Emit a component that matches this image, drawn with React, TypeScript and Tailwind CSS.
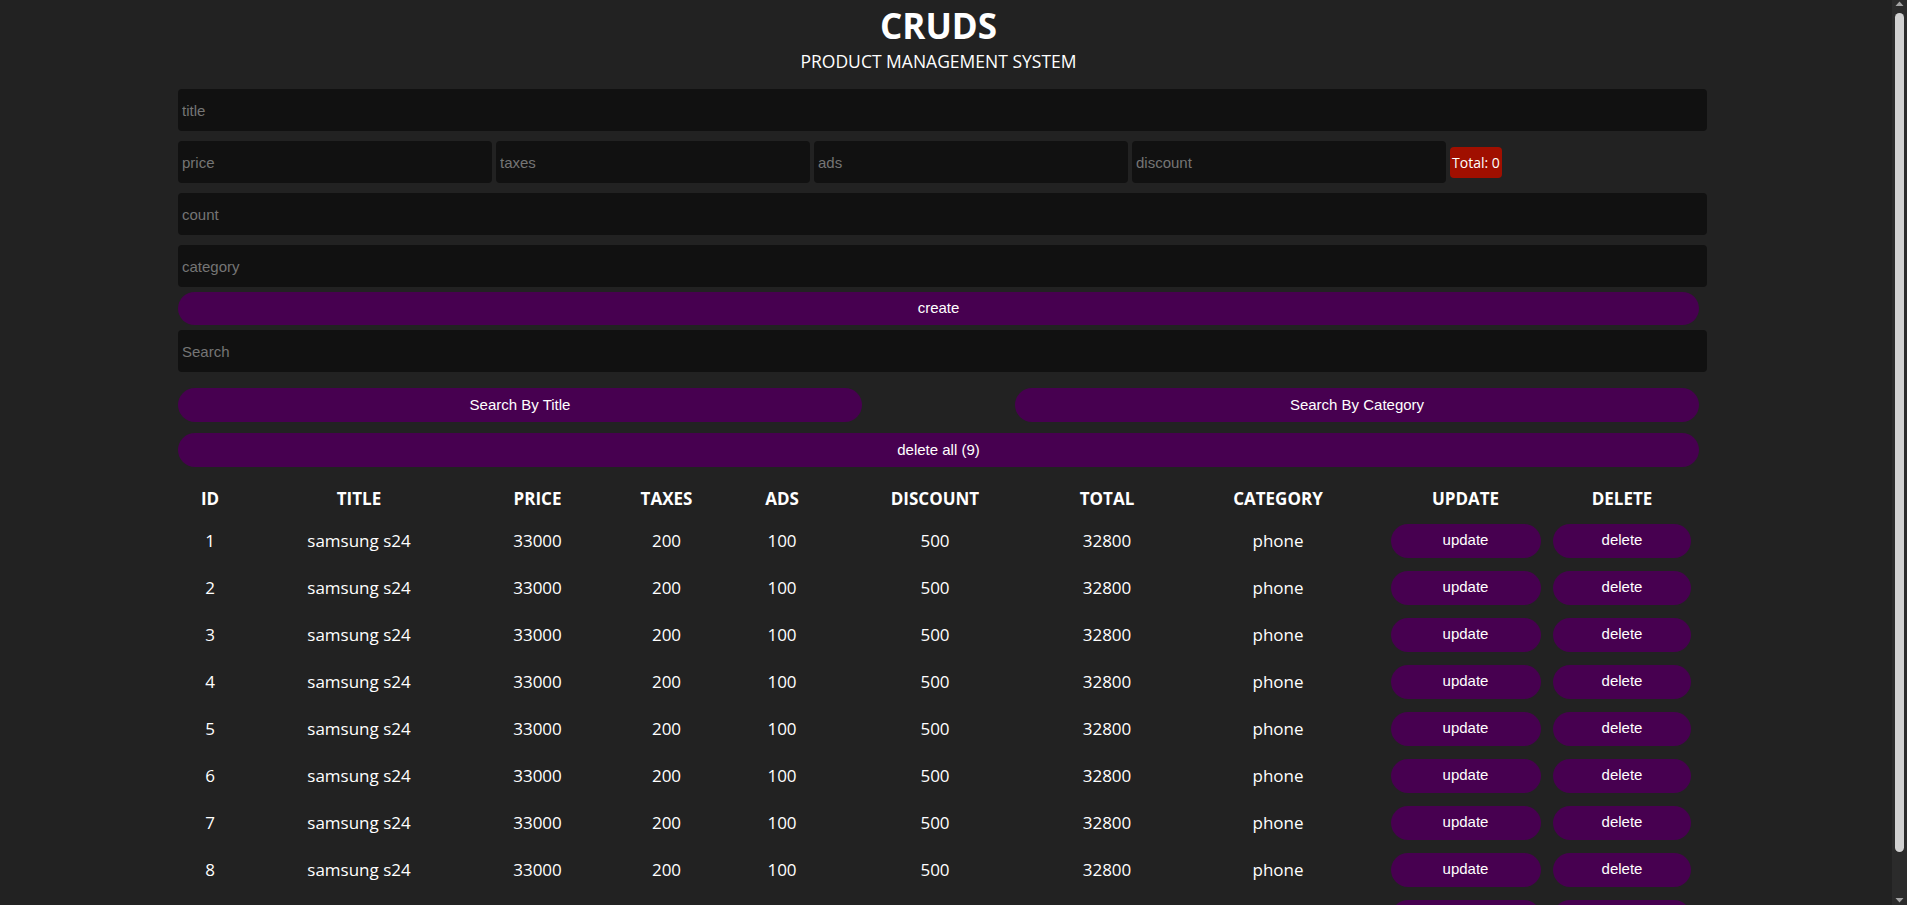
import React from "react";

const sans = "font-['Open_Sans','Noto_Sans',sans-serif]";
const arial = "font-['Liberation_Sans',Arial,sans-serif]";

const inputCls =
  "block bg-[#111111] text-white rounded-[4px] outline-none border-0 px-[4px] text-[15px] placeholder:text-[#757575] " +
  arial;

const btnCls =
  "bg-[#470050] text-white rounded-full text-[15px] flex items-center justify-center " + arial;

const cols = [64, 234, 123, 135, 96, 210, 134, 208, 167, 146];
const heads = ["ID", "TITLE", "PRICE", "TAXES", "ADS", "DISCOUNT", "TOTAL", "CATEGORY", "UPDATE", "DELETE"];

function ScrollBar() {
  return (
    <div className="flex h-screen w-[15px] shrink-0 flex-col items-center bg-[#2b2b2b]">
      <svg width="9" height="6" viewBox="0 0 9 6" className="mt-[1px]">
        <path d="M4.5 0.5 L8.5 5 L0.5 5 Z" fill="#a3a3a3" />
      </svg>
      <div className="mt-[6px] h-[839px] w-[9px] rounded-full bg-[#d1d1d1]" />
      <div className="flex-1" />
      <svg width="9" height="6" viewBox="0 0 9 6" className="mb-[2px]">
        <path d="M0.5 1 L8.5 1 L4.5 5.5 Z" fill="#a3a3a3" />
      </svg>
    </div>
  );
}

export default function App() {
  const rows = Array.from({ length: 9 }, (_, i) => i + 1);
  return (
    <div className="flex h-screen overflow-hidden bg-[#222222] text-white">
      <div className="h-screen flex-1 overflow-hidden">
        <div className="ml-[178px] w-[1521px] pb-[8px]">
          <div className={"text-center " + sans}>
            <h2 className="pt-[5px] text-[35px] leading-[42px] font-bold">CRUDS</h2>
            <p className="mt-[2px] text-[17.5px] leading-[24px]">PRODUCT MANAGEMENT SYSTEM</p>
          </div>

          <input className={inputCls + " mt-[16px] h-[42px] w-[1529px]"} placeholder="title" />
          <div className="mt-[10px] flex items-center gap-[4px]">
            <input className={inputCls + " h-[42px] w-[314px]"} placeholder="price" />
            <input className={inputCls + " h-[42px] w-[314px]"} placeholder="taxes" />
            <input className={inputCls + " h-[42px] w-[314px]"} placeholder="ads" />
            <input className={inputCls + " h-[42px] w-[314px]"} placeholder="discount" />
            <span
              className={
                "flex h-[31px] w-[52px] items-center justify-center rounded-[4px] bg-[#a00f00] text-[14px] text-white " +
                sans
              }
            >
              Total: 0
            </span>
          </div>
          <input className={inputCls + " mt-[10px] h-[42px] w-[1529px]"} placeholder="count" />
          <input className={inputCls + " mt-[10px] h-[42px] w-[1529px]"} placeholder="category" />
          <button className={btnCls + " mt-[5px] h-[33px] w-full"}>create</button>
          <input className={inputCls + " mt-[5px] h-[42px] w-[1529px]"} placeholder="Search" />
          <div className="mt-[16px] flex justify-between">
            <button className={btnCls + " h-[34px] w-[684px]"}>Search By Title</button>
            <button className={btnCls + " h-[34px] w-[684px]"}>Search By Category</button>
          </div>
          <button className={btnCls + " mt-[11px] h-[34px] w-full"}>delete all (9)</button>

          <table className={"mt-[14px] table-fixed border-collapse text-center " + sans} style={{ width: 1517 }}>
            <colgroup>
              {cols.map((w, i) => (
                <col key={i} style={{ width: w }} />
              ))}
            </colgroup>
            <thead>
              <tr className="h-[36px]">
                {heads.map((h) => (
                  <th key={h} className="p-0 text-[17px] font-bold">
                    {h}
                  </th>
                ))}
              </tr>
            </thead>
            <tbody>
              {rows.map((r) => (
                <tr key={r} className="h-[47px] text-[17px]">
                  <td className="p-0">{r}</td>
                  <td className="p-0">samsung s24</td>
                  <td className="p-0">33000</td>
                  <td className="p-0">200</td>
                  <td className="p-0">100</td>
                  <td className="p-0">500</td>
                  <td className="p-0">32800</td>
                  <td className="p-0">phone</td>
                  <td className="p-0">
                    <div className="flex justify-center">
                      <button className={btnCls + " h-[34px] w-[150px]"}>update</button>
                    </div>
                  </td>
                  <td className="p-0">
                    <div className="flex justify-center">
                      <button className={btnCls + " h-[34px] w-[138px]"}>delete</button>
                    </div>
                  </td>
                </tr>
              ))}
            </tbody>
          </table>
        </div>
      </div>
      <ScrollBar />
    </div>
  );
}
